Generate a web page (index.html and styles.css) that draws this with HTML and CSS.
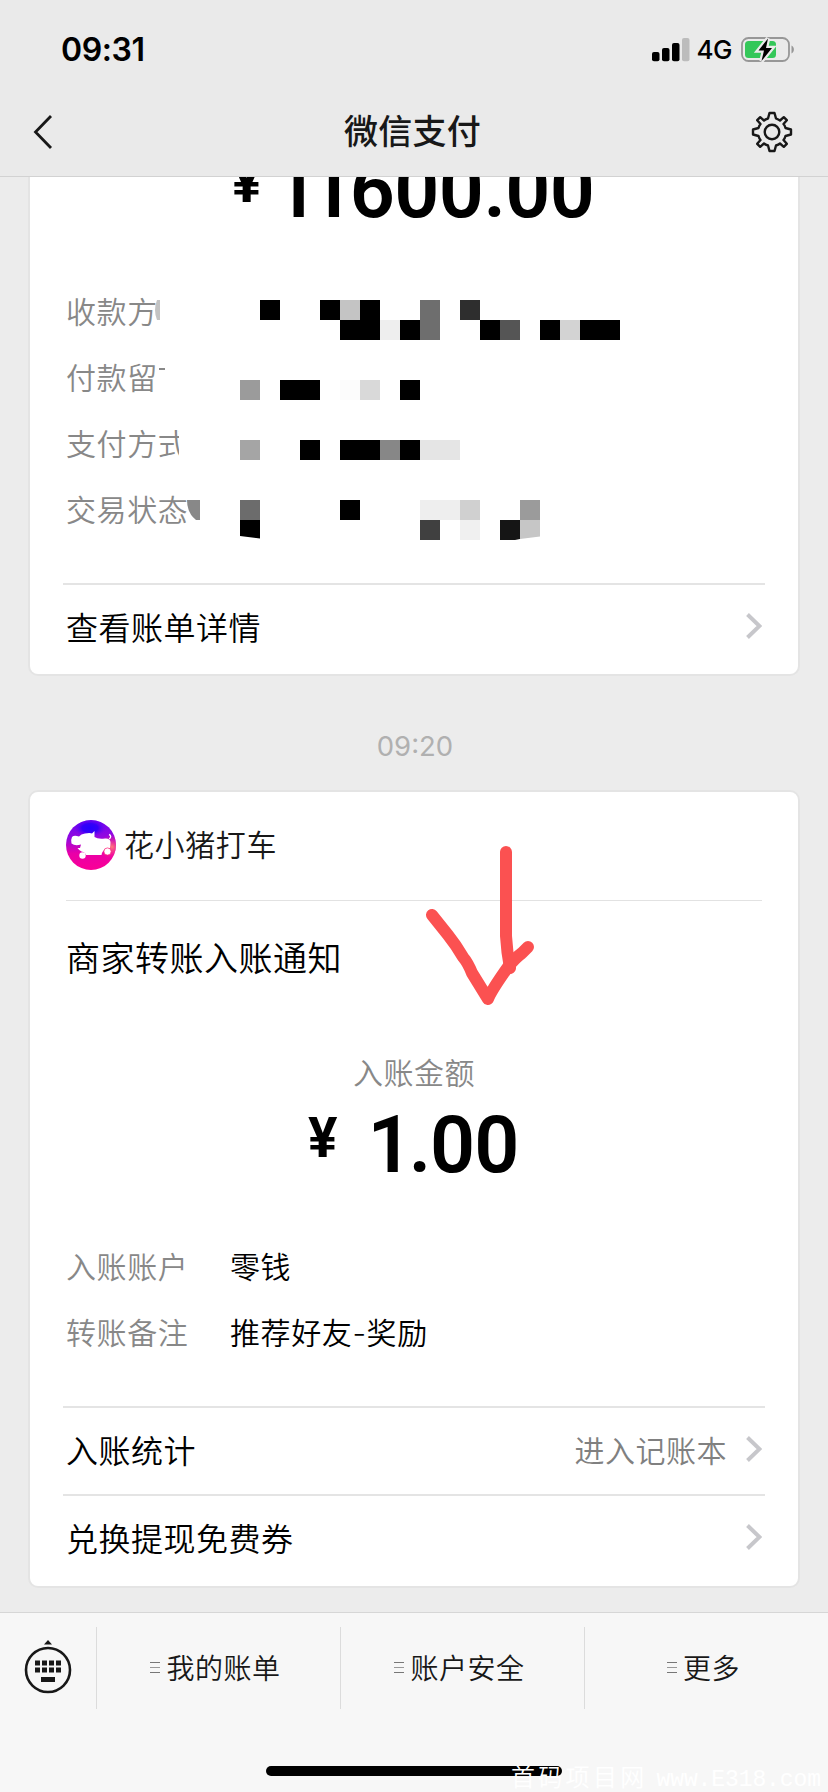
FILE: index.html
```html
<!DOCTYPE html>
<html lang="zh-CN">
<head>
<meta charset="utf-8">
<title>微信支付</title>
<link rel="stylesheet" href="styles.css">
</head>
<body>
<div class="phone">
  <header class="header">
    <div class="status">
      <span class="clock">09:31</span>
      <div class="indicators">
        <svg class="signal" width="38" height="24" viewBox="0 0 38 24"><rect x="0" y="14" width="7.5" height="9.3" rx="2"/><rect x="10" y="10" width="7.5" height="13.3" rx="2"/><rect x="20" y="5" width="7.5" height="18.3" rx="2"/><rect x="30" y="0" width="7.5" height="23.3" rx="2" fill="#bcbcbc"/></svg>
        <span class="network">4G</span>
        <svg class="battery" width="54" height="28" viewBox="0 0 54 28"><rect x="1" y="2" width="47" height="23" rx="6.5" fill="none" stroke="#979797" stroke-width="1.8"/><path d="M50.5 9.5c3.2 1.5 3.2 6.500 0 8z" fill="#979797"/><rect x="4" y="5" width="31" height="17" rx="3.500" fill="#34c759"/><path d="M27 2.500 17.500 14.500h5.500L20.500 25 31 12h-6z" fill="#000" stroke="#ebebeb" stroke-width="4.500" paint-order="stroke"/></svg>
      </div>
    </div>
    <div class="navbar">
      <svg class="back" width="20" height="36" viewBox="0 0 20 36"><path d="M18 2 2.500 18 18 34" fill="none" stroke="#181818" stroke-width="2.800"/></svg>
      <h1 class="title">微信支付</h1>
      <svg class="gear" width="42" height="42" viewBox="-21 -21 42 42" fill="none" stroke="#181818" stroke-width="2.400" stroke-linejoin="round"><circle r="7.300"/><path d="M-2.500-19H2.500L4-13.500Q6.500-12.500 8-11.500L11.800-14.800 14.800-11.800 11.500-8Q13-6.500 13.500-4L19-2.500V2.500L13.500 4Q12.800 6.500 11.500 8L14.800 11.800 11.800 14.800 8 11.500Q6.500 12.800 4 13.500L2.500 19H-2.500L-4 13.500Q-6.500 12.800-8 11.500L-11.800 14.800-14.800 11.800-11.500 8Q-12.800 6.500-13.500 4L-19 2.500V-2.500L-13.500-4Q-12.800-6.500-11.500-8L-14.800-11.800-11.800-14.800-8-11.500Q-6.500-12.800-4-13.500Z"/></svg>
    </div>
  </header>

  <main class="chat">
    <section class="card card-first">
      <div class="amount amount-cut"><span class="yen">¥</span><span class="digits"><span class="one-tight">1</span><span class="one">1</span>600.00</span></div>
      <div class="details">
        <div class="detail"><span class="label">收款方</span></div>
        <div class="detail"><span class="label">付款留</span></div>
        <div class="detail"><span class="label label-cut">支付方式</span></div>
        <div class="detail"><span class="label">交易状态</span></div>
        <svg class="mosaic" width="600" height="264" viewBox="40 279 600 264">
          <path d="M160 300h-3q-4 10 0 20h3z" fill="#c3c3c3"/><path d="M159 369h6" stroke="#888" stroke-width="2"/><path d="M187 500h13v20h-4q-9-7-9-20z" fill="#888"/>
          <g shape-rendering="crispEdges">
          <path d="M260 300h20v20h-20zM320 300h20v20h-20zM360 300h20v40h-40v-20h20zM400 320h20v20h-20zM480 320h20v20h-20zM540 320h20v20h-20zM580 320h40v20h-40zM280 380h40v20h-40zM400 380h20v20h-20zM300 440h20v20h-20zM340 440h40v20h-40zM400 440h20v20h-20zM340 500h20v20h-20z"/>
          <path d="M340 300h20v20h-20z" fill="#c4c4c4"/><path d="M380 320h20v20h-20z" fill="#eee"/><path d="M420 300h20v40h-20z" fill="#6e6e6e"/><path d="M460 300h20v20h-20z" fill="#2e2e2e"/><path d="M500 320h20v20h-20z" fill="#555"/><path d="M560 320h20v20h-20z" fill="#d3d3d3"/>
          <path d="M240 380h20v20h-20z" fill="#9b9b9b"/><path d="M340 380h20v20h-20z" fill="#fcfcfc"/><path d="M360 380h20v20h-20z" fill="#d9d9d9"/>
          <path d="M240 440h20v20h-20z" fill="#a5a5a5"/><path d="M380 440h20v20h-20z" fill="#878787"/><path d="M420 440h40v20h-40z" fill="#e5e5e5"/>
          <path d="M240 500h20v20h-20z" fill="#6c6c6c"/><path d="M420 500h40v20h-40z" fill="#eee"/><path d="M460 500h20v20h-20z" fill="#d0d0d0"/><path d="M520 500h20v20h-20z" fill="#9b9b9b"/>
          <path d="M420 520h20v20h-20z" fill="#404040"/><path d="M460 520h20v20h-20z" fill="#f0f0f0"/>
          </g>
          <path d="M240 520h20v18.500l-20-2.500z"/><path d="M500 520h20v19l-5 1h-15z" fill="#151515"/><path d="M520 520h20v16.500l-20 2.500z" fill="#c6c6c6"/>
        </svg>
      </div>
      <div class="link"><span>查看账单详情</span><svg class="chevron" width="16" height="26" viewBox="0 0 16 26"><path d="M1.500 1.500 13.500 13 1.500 24.500"/></svg></div>
    </section>

    <time class="time">09:20</time>

    <section class="card card-second">
      <div class="merchant">
        <svg class="avatar" width="50" height="50" viewBox="0 0 50 50">
          <defs>
            <linearGradient id="sky" x1=".5" y1="0" x2=".55" y2="1"><stop offset="0" stop-color="#6a05f0"/><stop offset=".35" stop-color="#9408e0"/><stop offset=".65" stop-color="#e900a8"/><stop offset="1" stop-color="#fa0096"/></linearGradient>
            <radialGradient id="blue"><stop offset="0" stop-color="#2500ff"/><stop offset=".5" stop-color="#3500f8"/><stop offset="1" stop-color="#6a05f0" stop-opacity="0"/></radialGradient>
            <radialGradient id="glow"><stop offset="0" stop-color="#ff7a78"/><stop offset="1" stop-color="#fa0096" stop-opacity="0"/></radialGradient>
            <clipPath id="disc"><circle cx="25" cy="25" r="25"/></clipPath>
          </defs>
          <g clip-path="url(#disc)"><rect width="50" height="50" fill="url(#sky)"/><ellipse cx="24" cy="8" rx="16" ry="9" fill="url(#blue)"/><circle cx="46" cy="27" r="13" fill="url(#glow)"/></g>
          <path d="M6 17Q8 15 13 16.500 15 14 19 13.500 24 12.500 26 13.500L28.500 11V17Q32 19.500 39 18.500 44 18 44.500 22 44.500 25 44 28L40 28.500Q36 31 35.500 35H20Q19 32 15.500 31.500 13 30 11.500 28L14 28 15 24.500Q9 26.500 5.500 23.500 4.500 20 6 17Z" fill="#fff"/>
          <circle cx="16.500" cy="35.500" r="3.200" fill="#fff"/><circle cx="41.500" cy="31.500" r="3.600" fill="#fff" stroke="#f27" stroke-width=".7"/>
          <path d="M43 19c2.500-1 2-4 0-4.500" fill="none" stroke="#fff" stroke-width="1.300"/>
        </svg>
        <span>花小猪打车</span>
      </div>
      <h2 class="notice">商家转账入账通知</h2>
      <div class="caption">入账金额</div>
      <div class="amount amount-full"><span class="yen">¥</span><span class="digits"><span class="one">1</span>.00</span></div>
      <div class="details details-second">
        <div class="detail"><span class="label">入账账户</span><span class="value">零钱</span></div>
        <div class="detail"><span class="label">转账备注</span><span class="value">推荐好友-奖励</span></div>
      </div>
      <div class="link"><span>入账统计</span><span class="hint">进入记账本</span><svg class="chevron" width="16" height="26" viewBox="0 0 16 26"><path d="M1.500 1.500 13.500 13 1.500 24.500"/></svg></div>
      <div class="link"><span>兑换提现免费券</span><svg class="chevron" width="16" height="26" viewBox="0 0 16 26"><path d="M1.500 1.500 13.500 13 1.500 24.500"/></svg></div>
      <svg class="arrow" width="120" height="170" viewBox="420 840 120 170" fill="none" stroke="#fb5151" stroke-width="12" stroke-linecap="round" stroke-linejoin="round"><path d="M506 852v84q1 17 4 32"/><path d="M432 915 448 935Q456 945 463 957 468 963 472 973L488 999Q491 991 508 967 515 958 522 953L528 947"/></svg>
    </section>
  </main>

  <footer class="footer">
    <nav class="tabs">
      <div class="keyboard"><svg width="48" height="56" viewBox="0 0 48 56"><path d="M20 5.500 24 1l4 4.500z" fill="#181818"/><circle cx="24" cy="31" r="22" fill="none" stroke="#181818" stroke-width="2.600"/><path d="M11 24h26M11 31h26" stroke="#181818" stroke-width="5" stroke-dasharray="5 2"/><path d="M17 40.500h14" stroke="#181818" stroke-width="5"/></svg></div>
      <div class="tab"><i class="bars"></i><span>我的账单</span></div>
      <div class="tab"><i class="bars"></i><span>账户安全</span></div>
      <div class="tab"><i class="bars"></i><span>更多</span></div>
    </nav>
    <div class="home"></div>
    <div class="watermark">首码项目网<span class="site">www.E318.com</span></div>
  </footer>
</div>
</body>
</html>
```
FILE: styles.css
```css
* { box-sizing: border-box; }

body {
  margin: 0;
  background: #ececec;
  font-family: Inter, "Noto Sans CJK SC", sans-serif;
  font-weight: 350;
  color: #000;
}

svg { display: block; flex: none; }
h1, h2 { margin: 0; }

.phone {
  display: flex;
  flex-direction: column;
  width: 828px;
  height: 1792px;
  overflow: hidden;
}

.header {
  flex: none;
  height: 177px;
  background: #eaeaea;
  border-bottom: 1px solid #d2d2d2;
}

.status {
  display: flex;
  justify-content: space-between;
  height: 88px;
  padding: 12px 33px 0 61px;
  line-height: 76px;
}
.clock { font-size: 32px; font-weight: 600; letter-spacing: -.4px; }
.indicators { display: flex; align-items: center; }
.network { margin: 0 9px 0 7px; font-size: 26px; font-weight: 450; letter-spacing: -.5px; }

.navbar {
  display: flex;
  align-items: center;
  justify-content: space-between;
  height: 88px;
  padding: 0 35px 0 33px;
}
.title { padding: 0 0 0 21px; font-size: 34px; font-weight: 500; line-height: 44px; letter-spacing: .2px; color: #181818; }

.chat {
  display: flex;
  flex: none;
  flex-direction: column;
  height: 1435px;
  padding: 0 28px;
}

.card {
  position: relative;
  flex: none;
  background: #fff;
  border: 2px solid #e4e4e4;
  border-radius: 10px;
}
.card-first { height: 499px; border-top: 0; border-radius: 0 0 10px 10px; }
.card-second { height: 798px; }

.amount {
  display: flex;
  font-family: Roboto, sans-serif;
  font-weight: 700;
  line-height: 80px;
}
.digits { font-size: 79px; font-weight: 600; letter-spacing: -1px; }
.yen { font-size: 55px; }
.amount-cut { height: 102px; overflow: hidden; padding-left: 202px; }
.amount-cut .digits { margin: -27px 0 0 12px; letter-spacing: -.6px; }
.amount-cut .yen { margin-top: -34px; }
.amount-full { height: 120px; padding-left: 278px; }
.amount-full .digits { margin: -9px 0 0 30px; }
.amount-full .yen { margin-top: -16px; }
.one { letter-spacing: -4px; }
.one-tight { letter-spacing: -10px; }

.details { position: relative; height: 304px; padding-left: 36px; }
.detail { display: flex; height: 66px; line-height: 66px; font-size: 30px; letter-spacing: .6px; }
.label { width: 164px; white-space: nowrap; color: #888; }
.label-cut { width: 113px; overflow: hidden; }
.mosaic { position: absolute; left: 10px; top: 0; }
.details-second { height: 172px; }

.link {
  display: flex;
  align-items: center;
  height: 88px;
  margin: 0 33px;
  padding: 0 3px 5px;
  border-top: 2px solid #e4e4e4;
  font-size: 32px;
  letter-spacing: .5px;
}
.chevron { margin-left: auto; fill: none; stroke: #c7c7cb; stroke-width: 4; }
.hint { margin: 0 19px 0 auto; font-size: 30px; color: #808080; }
.hint + .chevron { margin-left: 0; }

.time {
  height: 114px;
  padding-left: 2px;
  font-size: 27.5px;
  font-weight: 400;
  line-height: 141px;
  text-align: center;
  color: #b0b0b0;
}

.merchant {
  display: flex;
  align-items: center;
  gap: 8px;
  height: 109px;
  margin: 0 36px;
  padding-bottom: 2px;
  border-bottom: 1px solid #e2e2e2;
  font-size: 30px;
  line-height: 44px;
  letter-spacing: .6px;
  color: #181818;
}
.notice { height: 116px; padding-left: 36px; font-size: 34px; font-weight: 350; line-height: 116px; letter-spacing: .5px; }
.caption { height: 97px; padding-top: 31px; font-size: 30px; line-height: 50px; letter-spacing: .5px; text-align: center; color: #888; }
.arrow { position: absolute; left: 390px; top: 48px; }

.footer {
  position: relative;
  flex: none;
  height: 180px;
  overflow: hidden;
  background: #f7f7f7;
  border-top: 1px solid #d6d6d6;
}
.tabs { display: flex; height: 110px; padding-top: 14px; }
.keyboard { width: 96px; padding: 12px 0 0 24px; }
.tab {
  display: flex;
  align-items: center;
  justify-content: center;
  gap: 6px;
  width: 244px;
  height: 82px;
  padding: 0 6px 2px 0;
  border-left: 1px solid #dcdcdc;
  font-size: 28px;
  letter-spacing: .5px;
  color: #181818;
}
.bars { width: 10px; height: 11px; border: solid #777; border-width: 1px 0; background: linear-gradient(#999, #999) center / 100% 1px no-repeat; }

.home { width: 296px; height: 10px; margin: 43px 0 0 266px; border-radius: 5px; background: #000; }
.watermark {
  position: absolute;
  left: 511px;
  top: 147px;
  font-size: 24px;
  line-height: 36px;
  letter-spacing: 3.3px;
  white-space: nowrap;
  color: #fff;
}
.site { margin-left: 9px; font-family: "Liberation Mono", monospace; font-size: 23px; letter-spacing: -.1px; }
```
